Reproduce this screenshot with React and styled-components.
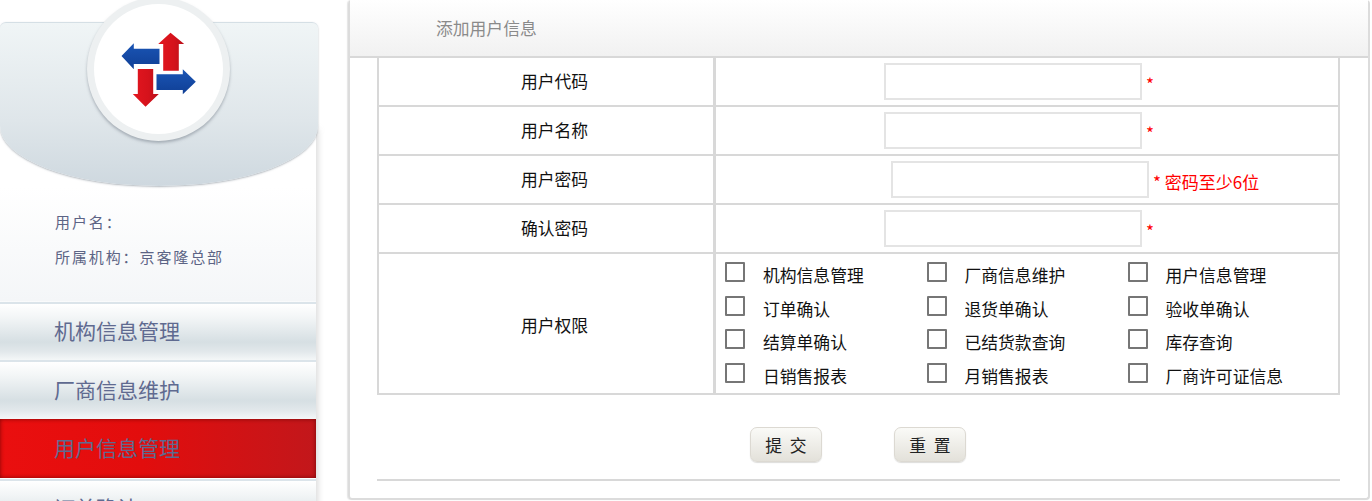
import React from "react";
import styled, { createGlobalStyle } from "styled-components";

const Global = createGlobalStyle`
  html, body { margin: 0; padding: 0; height: 501px; overflow: hidden; background: #fff; }
  body { font-family: "Noto Sans CJK SC", "Liberation Sans", sans-serif; }
  * { box-sizing: border-box; }
`;

const Page = styled.div`
  display: flex;
  align-items: flex-start;
  width: 1372px;
  height: 501px;
  overflow: hidden;
`;

const Sidebar = styled.aside`
  position: relative;
  flex: 0 0 316px;
  min-width: 0;
  height: 501px;
  padding-top: 22px;
`;

const Badge = styled.div`
  position: absolute;
  left: 87px;
  top: -3px;
  width: 143px;
  height: 144px;
  border-radius: 50%;
  background: #fff;
  border: 7px solid #edf0f1;
  box-shadow: 0 2px 3px rgba(120, 130, 140, 0.55);
  display: flex;
  align-items: center;
  justify-content: center;
  z-index: 2;
`;

const Logo = styled.svg`
  width: 80px;
  height: 80px;
  filter: blur(0.35px);
`;

const Cap = styled.div`
  position: relative;
  z-index: 1;
  width: 318px;
  height: 164px;
  border-radius: 6px 6px 159px 159px / 6px 6px 60px 60px;
  background: linear-gradient(180deg, #f0f5f6 0%, #dfe6ea 60%, #ced8df 100%);
  box-shadow: 0 1px 2px rgba(130, 140, 150, 0.6);
  border-top: 1px solid #d5dfe5;
`;

const Body = styled.div`
  height: 630px;
  margin-top: -59px;
  box-shadow: 4px 0 6px -2px rgba(150, 150, 150, 0.35);
  background: linear-gradient(180deg, #fff 0, #fff 60px, #f4f6f8 174px, #fff 175px);
`;

const Info = styled.div`
  height: 175px;
  padding: 85px 0 0 55px;
  font-size: 15px;
  letter-spacing: 1.9px;
  color: #5c6485;
`;

const InfoLine = styled.div`
  height: 35px;
  line-height: 20px;
`;

const MenuItem = styled.div`
  display: flex;
  align-items: center;
  height: ${(p) => p.$h}px;
  padding: 0 0 4px 54px;
  font-size: 21px;
  color: #5f6a90;
  border-top: ${(p) => (p.$active ? "0" : "2px solid #dbe4ea")};
  background: ${(p) =>
    p.$active
      ? "linear-gradient(90deg, #ea0f0f 0%, #e20d0d 45%, #c2171b 100%)"
      : "linear-gradient(180deg, #fff 0%, #f2f5f6 25%, #d6dfe3 68%, #e2e8eb 85%, #f4f7f8 100%)"};
  box-shadow: ${(p) =>
    p.$active ? "inset 0 0 4px rgba(90, 0, 0, 0.75)" : "none"};
  margin-bottom: ${(p) => (p.$active ? "1px" : "0")};
`;

const Panel = styled.main`
  flex: 0 0 1022px;
  height: 500px;
  margin-left: 32px;
  border: 2px solid #dcdcdc;
  border-top: 0;
  border-radius: 4px;
  box-shadow: -1px 0 1px rgba(190, 190, 190, 0.4);
`;

const PanelHeader = styled.header`
  height: 58px;
  padding: 0 0 0 86px;
  display: flex;
  align-items: center;
  font-size: 16.8px;
  color: #8a8a8a;
  background: linear-gradient(180deg, #ffffff 0%, #f1f1f1 100%);
  border-bottom: 2px solid #d8d8d8;
`;

const Content = styled.div`
  padding: 0 0 0 27px;
`;

const FormTable = styled.table`
  width: 963px;
  table-layout: fixed;
  border-collapse: separate;
  border-spacing: 0;
  border: 2px solid #d8d8d8;
  border-top: 0;
  font-size: 16.8px;
  color: #111;
`;

const LabelCell = styled.td`
  width: 337px;
  padding: ${(p) => (p.$last ? "2px" : "0")} 0 ${(p) => (p.$last ? "0" : "2px")} 17px;
  text-align: center;
  border-right: 3px solid #d8d8d8;
  border-bottom: ${(p) => (p.$last ? "0" : "2px solid #d8d8d8")};
  height: ${(p) => (p.$last ? 139 : 49)}px;
`;

const ValueCell = styled.td`
  padding: 0 0 0 ${(p) => p.$indent}px;
  border-bottom: ${(p) => (p.$last ? "0" : "2px solid #d8d8d8")};
  vertical-align: ${(p) => (p.$last ? "top" : "middle")};
`;

const FieldRow = styled.div`
  display: flex;
  align-items: center;
`;

const TextInput = styled.input`
  width: 258px;
  height: 37px;
  border: 2px solid #e4e4e4;
  background: #fff;
  outline: none;
`;

const Required = styled.span`
  margin-left: ${(p) => p.$gap}px;
  padding-top: 3px;
  color: #f00;
  font-size: 17px;
  white-space: nowrap;
`;

const PermGrid = styled.div`
  display: grid;
  grid-template-columns: 201.5px 201px 1fr;
  grid-template-rows: repeat(3, 33.7px) 30px;
  padding: 8px 0 0 9px;
`;

const PermItem = styled.label`
  display: flex;
  align-items: flex-start;
  gap: 18px;
`;

const Check = styled.input.attrs({ type: "checkbox" })`
  appearance: none;
  flex: none;
  width: 20px;
  height: 20px;
  margin: 0;
  background: #fff;
  border: 2px solid #767676;
  border-radius: 1px;
`;

const PermText = styled.span`
  line-height: 24px;
  margin-top: 1px;
`;

const Actions = styled.div`
  display: flex;
  gap: 72px;
  padding: 32px 0 0 373px;
`;

const Button = styled.button`
  width: 72px;
  height: 35px;
  padding: 0;
  font-family: inherit;
  font-size: 16.8px;
  word-spacing: 4px;
  color: #222;
  border: 1px solid #dcd9d2;
  border-radius: 7px;
  background: linear-gradient(180deg, #fafaf7 0%, #e3e1da 100%);
  box-shadow: 0 1px 1px rgba(170, 170, 165, 0.4);
`;

const Rule = styled.hr`
  width: 963px;
  height: 2px;
  margin: 17px 0 0;
  border: 0;
  background: #d8d8d8;
`;

const fields = [
  { label: "用户代码", indent: 168, gap: 4, note: "*" },
  { label: "用户名称", indent: 168, gap: 4, note: "*" },
  { label: "用户密码", indent: 175, gap: 4, note: "* 密码至少6位" },
  { label: "确认密码", indent: 168, gap: 4, note: "*" },
];

const perms = [
  "机构信息管理", "厂商信息维护", "用户信息管理",
  "订单确认", "退货单确认", "验收单确认",
  "结算单确认", "已结货款查询", "库存查询",
  "日销售报表", "月销售报表", "厂商许可证信息",
];

const menu = [
  { name: "机构信息管理", h: 58 },
  { name: "厂商信息维护", h: 59 },
  { name: "用户信息管理", h: 59, active: true },
  { name: "订单确认", h: 58 },
];

export default function App() {
  return (
    <Page>
      <Global />
      <Sidebar>
        <Badge>
          <Logo viewBox="118.5 29 80 80">
            <defs>
              <linearGradient id="r" x1="0" x2="1" y1="0" y2="0">
                <stop offset="0" stopColor="#e3161f" />
                <stop offset="0.6" stopColor="#d5121b" />
                <stop offset="1" stopColor="#b9101a" />
              </linearGradient>
              <linearGradient id="b" x1="0" x2="0" y1="0" y2="1">
                <stop offset="0" stopColor="#1a55b5" />
                <stop offset="1" stopColor="#103f95" />
              </linearGradient>
            </defs>
            <polygon fill="url(#r)" points="170,32.7 183.7,44 178.3,44 178.3,70.7 162.7,70.7 162.7,44 157.7,44" />
            <polygon fill="url(#b)" points="121,56 133.3,43.3 133.3,48.7 159,48.7 159,64 133.3,64 133.3,69.3" />
            <polygon fill="url(#r)" points="145,106.7 158.3,94 152.7,94 152.7,69 137.3,69 137.3,94 132.3,94" />
            <polygon fill="url(#b)" points="195.3,81.7 182.3,69.3 182.3,74.3 156,74.3 156,90 182.3,90 182.3,94.3" />
          </Logo>
        </Badge>
        <Cap />
        <Body>
          <Info>
            <InfoLine>用户名：</InfoLine>
            <InfoLine>所属机构：京客隆总部</InfoLine>
          </Info>
          {menu.map((m) => (
            <MenuItem key={m.name} $h={m.h} $active={m.active}>
              {m.name}
            </MenuItem>
          ))}
        </Body>
      </Sidebar>
      <Panel>
        <PanelHeader>添加用户信息</PanelHeader>
        <Content>
          <FormTable>
            <tbody>
              {fields.map((f) => (
                <tr key={f.label}>
                  <LabelCell>{f.label}</LabelCell>
                  <ValueCell $indent={f.indent}>
                    <FieldRow>
                      <TextInput />
                      <Required $gap={f.gap}>{f.note}</Required>
                    </FieldRow>
                  </ValueCell>
                </tr>
              ))}
              <tr>
                <LabelCell $last>用户权限</LabelCell>
                <ValueCell $last $indent={0}>
                  <PermGrid>
                    {perms.map((p) => (
                      <PermItem key={p}>
                        <Check />
                        <PermText>{p}</PermText>
                      </PermItem>
                    ))}
                  </PermGrid>
                </ValueCell>
              </tr>
            </tbody>
          </FormTable>
          <Actions>
            <Button>提 交</Button>
            <Button>重 置</Button>
          </Actions>
          <Rule />
        </Content>
      </Panel>
    </Page>
  );
}
